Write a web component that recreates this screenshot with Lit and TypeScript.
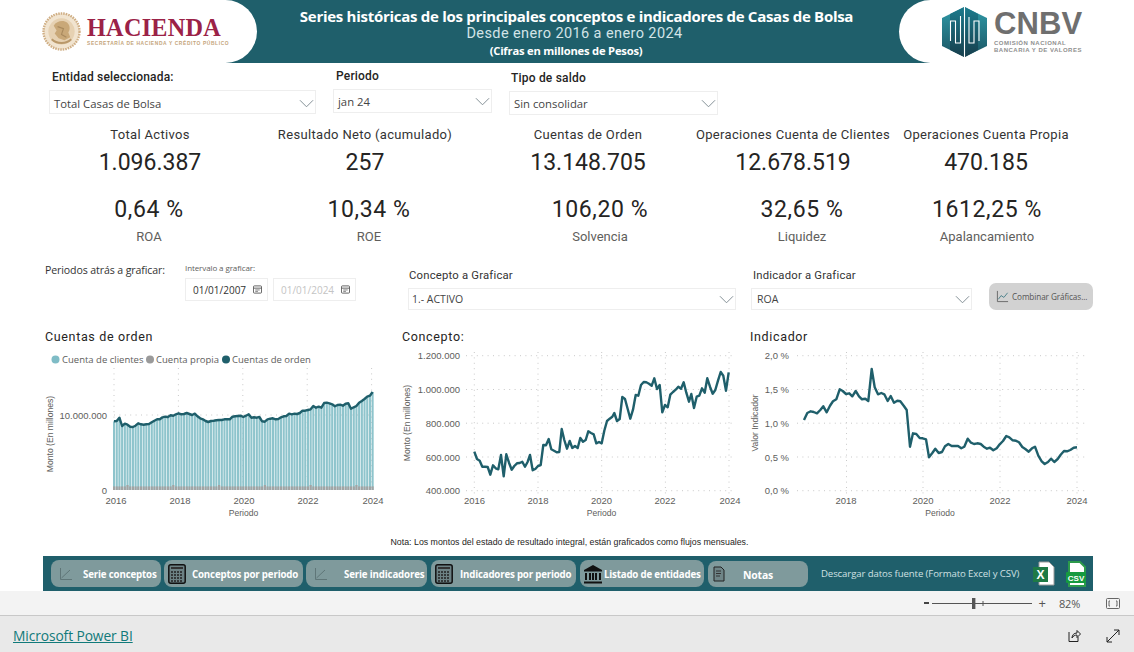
import { LitElement, html, css, svg } from "lit";
import { customElement } from "lit/decorators.js";

type P = [number, number];

// Series are given in zoomed reference units and mapped to page pixels below.
const c2raw = "238,335;246,357;254,362;262,380;270,380;278,381;286,404;294,376;302,385;310,388;318,345;326,409;334,343;342,368;350,389;358,378;366,370;374,369;382,365;390,380;398,365;405,345;413,391;421,387;429,378;437,375;445,315;453,316;461,297;469,328;477,332;485,337;493,336;500,267;508,300;516,326;524,303;532,324;540,318;548,324;556,294;564,305;572,300;580,274;588,279;596,283;604,310;612,306;620,310;628,272;636,243;644,236;652,230;658,219;666,243;674,237;682,171;690,177;698,207;706,236;714,209;722,165;730,167;738,135;746,126;754,127;762,131;770,137;778,115;786,147;794,135;802,217;810,195;818,202;826,164;834,156;842,149;850,140;858,146;866,127;874,158;882,185;889,162;897,204;905,170;913,167;921,145;929,158;937,115;945,140;953,161;961,150;969,122;977,96;985,107;993,152;1001,97";
const c3raw = "177,240;187,219;197,214;206,216;216,220;226,210;235,199;245,217;255,197;264,184;274,178;284,148;293,153;303,162;313,160;322,169;332,153;342,169;351,178;361,176;370,183;380,87;389,142;399,163;409,159;418,163;428,183;437,168;447,188;457,182;466,184;476,197;485,210;495,320;504,280;514,282;524,294;533,295;543,298;552,352;562,339;571,326;581,339;591,336;600,319;610,312;620,318;629,318;639,318;649,325;658,320;668,296;678,308;687,312;697,310;707,312;716,320;726,326;735,323;745,331;755,325;764,313;774,303;784,288;793,292;803,301;813,302;822,307;832,321;841,327;851,335;861,325;870,320;880,347;890,364;899,372;909,366;918,356;928,366;938,357;947,344;957,333;966,334;976,330;986,323;996,322";
const c1y = [124,123,113,138,131,134,140,141,137,130,133,134,133,132,127,122,118,118,112,110,111,106,107,103,100,103,102,99,102,105,101,109,115,118,123,126,123,122,121,120,120,118,118,118,110,109,108,107,111,107,103,113,112,113,111,124,125,118,116,115,118,117,112,109,108,101,103,101,102,99,92,92,90,88,78,83,80,83,69,68,70,73,79,75,74,77,71,70,86,82,78,68,63,57,50,47,36];

const parse = (s: string): P[] => s.split(";").map((p) => p.split(",").map(Number) as P);
const path = (pts: P[]) => pts.map((p) => `${p[0].toFixed(1)},${p[1].toFixed(1)}`).join(" ");

// chart-local coordinates: row top = 326 on the page
const ROW = 326;
const c1Org = 43, c2Org = 398, c3Org = 745;
const c1Pts: P[] = c1y.map((y, i) => [30 + (252 + i * 8.08) / 3 - c1Org, 380 + y / 3 - ROW]);
const c2Pts: P[] = parse(c2raw).map(([x, y]) => [395 + x / 3 - c2Org, 340 + y / 3 - ROW]);
const c3Pts: P[] = parse(c3raw).map(([x, y]) => [745 + x / 3 - c3Org, 340 + y / 3 - ROW]);

const chevron = html`<svg class="chev" viewBox="0 0 16 9"><path d="M1 1l7 7 7-7" fill="none" stroke="#7d8a90" stroke-width="1"/></svg>`;
const calendar = html`<svg class="cal" viewBox="0 0 10 9"><rect x=".5" y=".5" width="9" height="8" rx="1" fill="none" stroke="#555"/><path d="M.5 3h9" stroke="#555"/><path d="M2.5 5h5M2.5 6.6h3" stroke="#777"/></svg>`;
const lineIcon = html`<svg class="ic-line" viewBox="0 0 14 14"><path d="M1.5 1v11.5H13" fill="none" stroke="#5f7678" stroke-width="1"/><path d="M2.5 11L11 3" stroke="#5f7678" stroke-width="1"/></svg>`;
const tableIcon = html`<svg class="ic-tab" viewBox="0 0 18 20"><rect x=".8" y=".8" width="16.4" height="18.4" rx="2" fill="#6c8184" stroke="#111" stroke-width="1.5"/><path d="M3 4h12" stroke="#333" stroke-width="2"/><path d="M3 8h12M3 11h12M3 14h12M3 17h12" stroke="#222" stroke-width="1.6" stroke-dasharray="2 1"/></svg>`;
const bankIcon = html`<svg class="ic-bank" viewBox="0 0 20 20"><path d="M10 1L1 6v1.5h18V6z" fill="#111"/><path d="M3 9v7M7 9v7M10 9v7M13 9v7M17 9v7" stroke="#111" stroke-width="2"/><path d="M1 17.5h18v2H1z" fill="#111"/></svg>`;
const noteIcon = html`<svg class="ic-note" viewBox="0 0 12 16"><path d="M1 1h7l3 3v11H1z" fill="#6f8587" stroke="#222" stroke-width="1"/><path d="M3 5h5M3 7.5h5M3 10h4" stroke="#333"/></svg>`;

const hGrid = (ys: number[], x1: number, x2: number) =>
  ys.map((y) => svg`<line class="grid" x1=${x1} x2=${x2} y1=${y} y2=${y}></line>`);
const vGrid = (xs: number[], y1: number, y2: number) =>
  xs.map((x) => svg`<line class="grid" x1=${x} x2=${x} y1=${y1} y2=${y2}></line>`);
const xTicks = (ticks: [number, string][], y: number) =>
  ticks.map(([x, t]) => svg`<text class="tick" x=${x} y=${y} text-anchor="middle">${t}</text>`);
const yTicks = (ticks: [number, string][], x: number) =>
  ticks.map(([y, t]) => svg`<text class="tick" x=${x} y=${y + 3.5} text-anchor="end">${t}</text>`);

@customElement("app-root")
export class AppRoot extends LitElement {
  static styles = css`
    :host { display: block; width: 1134px; height: 652px; overflow: hidden; background: #fff; font-family: "Roboto", "Liberation Sans", sans-serif; color: #252423; }
    * { box-sizing: border-box; }
    .page { display: flex; flex-direction: column; width: 1134px; height: 652px; }

    .header { height: 63px; flex: none; display: flex; background: #1f5f6b; }
    .brand-l { width: 257px; flex: none; background: #fff; border-radius: 0 32px 32px 0; display: flex; align-items: center; padding-left: 42px; gap: 6px; }
    .brand-r { width: 235px; flex: none; background: #fff; border-radius: 32px 0 0 32px; display: flex; align-items: center; padding-left: 43px; gap: 7px; }
    .titles { flex: 1; color: #fff; text-align: center; display: flex; flex-direction: column; align-items: center; padding-top: 7px; font-family: "Open Sans", sans-serif; }
    .t1 { font-weight: 700; font-size: 15px; line-height: 18px; letter-spacing: -0.28px; white-space: nowrap; margin-right: 3px; }
    .t2 { font-size: 14.5px; line-height: 18px; font-family: "Roboto", sans-serif; letter-spacing: 0.4px; color: #d3e4e7; white-space: nowrap; margin-right: 7px; }
    .t3 { font-weight: 700; font-size: 11.2px; line-height: 15px; letter-spacing: -0.2px; white-space: nowrap; margin-right: 24px; }
    .seal { width: 39px; height: 39px; flex: none; }
    .hac { display: flex; flex-direction: column; }
    .hac-name { font-family: "Liberation Serif", serif; font-weight: 700; font-size: 24.2px; line-height: 24px; color: #9b2247; letter-spacing: 0.3px; }
    .hac-sub { font-family: "Liberation Sans", sans-serif; font-weight: 700; font-size: 4.9px; line-height: 8px; color: #c4a57a; letter-spacing: 0.62px; white-space: nowrap; }
    .hex { width: 45px; height: 50px; flex: none; }
    .cnbv { display: flex; flex-direction: column; }
    .cnbv-name { font-family: "Liberation Sans", sans-serif; font-weight: 700; font-size: 31px; line-height: 28px; color: #6f6f6f; letter-spacing: 0.1px; }
    .cnbv-sub { font-family: "Liberation Sans", sans-serif; font-weight: 700; font-size: 6px; line-height: 7px; color: #8f8f8f; letter-spacing: 0.5px; white-space: nowrap; margin-top: 2px; }

    .filters { height: 55px; flex: none; display: flex; padding-left: 49px; gap: 17px; }
    .filter { display: flex; flex-direction: column; }
    .f1 { width: 267px; padding-top: 6px; }
    .f2 { width: 159px; padding-top: 5px; }
    .f3 { width: 209px; padding-top: 7px; }
    .flabel { font-size: 12px; line-height: 16px; font-weight: 500; padding-left: 3px; letter-spacing: 0.2px; height: 21px; white-space: nowrap; }
    .f3 .flabel { padding-left: 2px; }
    .drop { display: flex; align-items: center; justify-content: space-between; height: 24px; border: 1px solid #eeeeee; padding: 2px 1px 0 4px; font-family: "Open Sans", sans-serif; font-size: 11.3px; color: #444; }
    .f2 .drop, .f3 .drop { padding-top: 0; }
    .chev { width: 15px; height: 9px; flex: none; }

    .kpis { height: 132px; flex: none; display: flex; flex-direction: column; padding-left: 50px; padding-top: 8px; }
    .krow { display: grid; white-space: nowrap; }
    .kr1 { grid-template-columns: 200px 230px 216px 194px 192px; height: 60px; }
    .kr2 { grid-template-columns: 198px 242px 220px 184px 186px; }
    .kpi { display: flex; flex-direction: column; align-items: center; }
    .ktitle { font-size: 13px; line-height: 17px; letter-spacing: 0.33px; color: #333; }
    .kvalue { font-size: 23px; line-height: 40px; letter-spacing: 0; color: #252423; }
    .kval2 { font-size: 23px; line-height: 28px; letter-spacing: 0.6px; color: #252423; margin-top: 10px; }
    .klabel { font-size: 13px; line-height: 18px; letter-spacing: 0; color: #605e5c; margin-top: 4px; }

    .controls { height: 76px; flex: none; display: flex; padding: 8px 0 0 45px; }
    .back { width: 140px; font-size: 10.6px; line-height: 16px; font-family: "Open Sans", sans-serif; letter-spacing: -0.12px; color: #333; padding-top: 4px; white-space: nowrap; }
    .interval { width: 223px; display: flex; flex-direction: column; }
    .ilabel { font-size: 8px; line-height: 12px; color: #605e5c; height: 20px; padding-top: 4px; font-family: "Open Sans", sans-serif; letter-spacing: -0.1px; }
    .dates { display: flex; gap: 5px; }
    .date { width: 83px; height: 23px; border: 1px solid #eeeeee; display: flex; justify-content: space-between; align-items: center; padding: 0 5px 0 7px; font-family: "Open Sans", sans-serif; font-size: 10px; color: #333; }
    .date.dim { color: #c4c4c4; }
    .cal { width: 9px; height: 9px; }
    .concept { width: 343px; display: flex; flex-direction: column; padding-top: 9px; }
    .indic { width: 238px; display: flex; flex-direction: column; padding-top: 9px; }
    .clabel { font-size: 11.3px; line-height: 16px; letter-spacing: 0.2px; color: #333; height: 21px; padding: 1px 0 0 1px; }
    .indic .clabel { padding-left: 2px; }
    .drop.c { height: 22px; width: 328px; padding: 0 1px 0 3px; font-size: 10.5px; }
    .indic .drop.c { width: 221px; padding-left: 5px; }
    .combine { width: 104px; height: 27px; margin-top: 25px; border-radius: 7px; background: #d2d2d2; color: #555; font-family: "Open Sans", sans-serif; font-size: 8.2px; display: flex; align-items: center; gap: 3px; padding-left: 7px; white-space: nowrap; letter-spacing: -0.1px; }
    .combine svg { width: 13px; height: 13px; flex: none; }

    .charts { height: 196px; flex: none; display: flex; padding-left: 43px; gap: 10px; }
    .charts svg.chart { height: 196px; display: block; overflow: visible; flex: none; }
    .c1 { width: 345px; }
    .c2 { width: 337px; }
    .c3 { width: 340px; }
    .grid { stroke: #c9c9c9; stroke-width: 1; stroke-dasharray: 1 4.4; }
    .ctitle { font-family: "Roboto", sans-serif; font-size: 12.5px; letter-spacing: 0.65px; fill: #252423; }
    .tick { font-family: "Liberation Sans", sans-serif; font-size: 9.5px; fill: #605e5c; }
    .axis { font-family: "Liberation Sans", sans-serif; font-size: 8.6px; fill: #605e5c; }
    .legend { font-family: "Open Sans", sans-serif; font-size: 9.5px; fill: #605e5c; }
    .line { fill: none; stroke: #1f5f6b; stroke-width: 2.4; stroke-linejoin: round; }
    .bar { fill: #8ec4cc; }
    .bar2 { fill: #a3a3a3; }

    .note { height: 34px; flex: none; text-align: center; font-family: "Liberation Sans", sans-serif; font-size: 8.8px; line-height: 13px; padding: 14px 0 0 5px; color: #252423; }

    .bar-nav { height: 35px; flex: none; margin: 0 41px 0 43px; background: #1f5f6b; display: flex; align-items: center; padding-left: 8px; gap: 3px; }
    .btn { height: 27px; border-radius: 8px; background: #7f9a9c; color: #fff; font-family: "Open Sans", sans-serif; font-weight: 700; font-size: 9.7px; display: flex; align-items: center; white-space: nowrap; padding-left: 8px; letter-spacing: -0.15px; }
    .btn span { padding-top: 2px; }
    .b1 { width: 110px; gap: 10px; }
    .b2 { width: 139px; gap: 6px; padding-left: 4px; }
    .b3 { width: 121px; gap: 16px; }
    .b4 { width: 145px; gap: 7px; padding-left: 4px; margin-left: 1px; letter-spacing: -0.18px; }
    .b5 { width: 124px; gap: 1px; padding-left: 3px; margin-left: 1px; letter-spacing: -0.18px; }
    .b6 { width: 100px; gap: 18px; padding-left: 5px; margin-left: 1px; font-size: 10.4px; height: 26px; }
    .ic-line { width: 14px; height: 14px; flex: none; }
    .ic-tab { width: 18px; height: 20px; flex: none; }
    .ic-bank { width: 20px; height: 20px; flex: none; }
    .ic-note { width: 12px; height: 16px; flex: none; }
    .dl { font-family: "Open Sans", sans-serif; font-size: 9.6px; color: #cfe0e2; margin-left: 10px; white-space: nowrap; letter-spacing: -0.1px; }
    .xl { width: 24px; height: 26px; margin-left: 10px; flex: none; }
    .csv { width: 22px; height: 26px; margin-left: 6px; flex: none; }
    .xl text, .csv text { font-family: "Liberation Sans", sans-serif; font-weight: 700; }

    .status { height: 25px; flex: none; background: #f3f3f3; border-bottom: 1px solid #c8c8c8; display: flex; align-items: center; justify-content: flex-end; font-family: "Open Sans", sans-serif; font-size: 11px; color: #555; padding-right: 14px; }
    .minus { width: 5px; height: 2px; background: #444; margin-right: 3px; }
    .slider { width: 100px; height: 11px; flex: none; margin-right: 7px; }
    .plus { font-size: 13px; margin-right: 13px; }
    .pct { width: 24px; margin-right: 23px; letter-spacing: -0.2px; }
    .fit { width: 14px; height: 11px; flex: none; }
    .footer { flex: 1; background: #e9e9e9; display: flex; align-items: center; padding: 3px 14px 0 13px; }
    .link { font-family: "Open Sans", sans-serif; font-size: 13.8px; color: #117a7a; text-decoration: underline; letter-spacing: -0.1px; flex: 1; }
    .fi { width: 14px; height: 14px; flex: none; margin-left: 25px; }
  `;

  private dropdown(text: string) {
    return html`<div class="drop"><span>${text}</span>${chevron}</div>`;
  }

  private kpi(title: string, value: string) {
    return html`<div class="kpi"><span class="ktitle">${title}</span><span class="kvalue">${value}</span></div>`;
  }

  private kpi2(value: string, label: string) {
    return html`<div class="kpi"><span class="kval2">${value}</span><span class="klabel">${label}</span></div>`;
  }

  private chart1() {
    const base = 490 - ROW;
    const xs = [71, 135.4, 199.8, 264.2, 328.6];
    return html`<svg class="chart c1" viewBox="0 0 345 196">
      <text class="ctitle" x="2" y="15">Cuentas de orden</text>
      <circle cx="12.5" cy="33.5" r="4" fill="#7fbcc6"></circle><text class="legend" x="19" y="37">Cuenta de clientes</text>
      <circle cx="107" cy="33.5" r="4" fill="#9a9a9a"></circle><text class="legend" x="113" y="37">Cuenta propia</text>
      <circle cx="183" cy="33.5" r="4" fill="#1f5f6b"></circle><text class="legend" x="189" y="37">Cuentas de orden</text>
      ${hGrid([89], 71, 330)}
      ${vGrid(xs, 42, 164)}
      ${c1Pts.map(([x, y]) => svg`<rect class="bar" x=${x - 1} y=${y} width="2.1" height=${base - y}></rect>`)}
      ${c1Pts.map(([x], i) => {
        const h = i % 17 === 5 ? 5 : 3.6;
        return svg`<rect class="bar2" x=${x - 1} y=${base - h} width="2.1" height=${h}></rect>`;
      })}
      <polyline class="line" points=${path(c1Pts)}></polyline>
      ${yTicks([[89, "10.000.000"], [164, "0"]], 64)}
      ${xTicks([[73, "2016"], [137, "2018"], [201, "2020"], [265, "2022"], [330, "2024"]], 178)}
      <text class="axis" x="200.5" y="190" text-anchor="middle">Periodo</text>
      <text class="axis" transform="translate(9.5 108) rotate(-90)" text-anchor="middle">Monto (En millones)</text>
    </svg>`;
  }

  private chart2() {
    const xs = [474.3, 538, 601.7, 665.4, 729].map((x) => x - c2Org);
    const ys = [355.7, 389.5, 423.2, 457, 490.7].map((y) => y - ROW);
    return html`<svg class="chart c2" viewBox="0 0 337 196">
      <text class="ctitle" x="4" y="15">Concepto:</text>
      ${hGrid(ys, 68, 338)}
      ${vGrid(xs, 26, 168)}
      <polyline class="line" points=${path(c2Pts)}></polyline>
      ${yTicks([[ys[0], "1.200.000"], [ys[1], "1.000.000"], [ys[2], "800.000"], [ys[3], "600.000"], [ys[4], "400.000"]], 62)}
      ${xTicks([[76.5, "2016"], [140, "2018"], [203.5, "2020"], [267, "2022"], [332, "2024"]], 178)}
      <text class="axis" x="203.5" y="190" text-anchor="middle">Periodo</text>
      <text class="axis" transform="translate(12 97) rotate(-90)" text-anchor="middle">Monto (En millones)</text>
    </svg>`;
  }

  private chart3() {
    const xs = [846.5, 923, 1000, 1077].map((x) => x - c3Org);
    const ys = [355.7, 389.5, 423.2, 457, 490.7].map((y) => y - ROW);
    return html`<svg class="chart c3" viewBox="0 0 340 196">
      <text class="ctitle" x="5" y="15">Indicador</text>
      ${hGrid(ys, 52, 340)}
      ${vGrid(xs, 26, 168)}
      <polyline class="line" points=${path(c3Pts)}></polyline>
      ${yTicks([[ys[0], "2,0 %"], [ys[1], "1,5 %"], [ys[2], "1,0 %"], [ys[3], "0,5 %"], [ys[4], "0,0 %"]], 44)}
      ${xTicks([[101, "2018"], [178, "2020"], [255, "2022"], [332, "2024"]], 178)}
      <text class="axis" x="195" y="190" text-anchor="middle">Periodo</text>
      <text class="axis" transform="translate(13 97) rotate(-90)" text-anchor="middle">Valor Indicador</text>
    </svg>`;
  }

  render() {
    return html`<div class="page">
      <div class="header">
        <div class="brand-l">
          <svg class="seal" viewBox="0 0 40 40">
            <circle cx="20" cy="20" r="18.5" fill="#f1e4d0" stroke="#cfae84" stroke-width="2.4" stroke-dasharray="1.6 1"></circle>
            <circle cx="20" cy="20" r="13.5" fill="#e6d1b2"></circle>
            <path d="M12 14c3-5 10-6 14-3 3 3 3 7 1 10l2 5-6 3-6-2-4-5 2-3z" fill="#c9a878"></path>
            <path d="M10 28c5 5 15 5 20 0" fill="none" stroke="#b9986a" stroke-width="2"></path>
            <path d="M16 15l6 2-2 6 5 3" fill="none" stroke="#a98a5e" stroke-width="1.2"></path>
          </svg>
          <div class="hac">
            <span class="hac-name">HACIENDA</span>
            <span class="hac-sub">SECRETARÍA DE HACIENDA Y CRÉDITO PÚBLICO</span>
          </div>
        </div>
        <div class="titles">
          <span class="t1">Series históricas de los principales conceptos e indicadores de Casas de Bolsa</span>
          <span class="t2">Desde enero 2016 a enero 2024</span>
          <span class="t3">(Cifras en millones de Pesos)</span>
        </div>
        <div class="brand-r">
          <svg class="hex" viewBox="0 0 45 50">
            <defs>
              <linearGradient id="hx" x1="0" y1="0" x2="0" y2="1"><stop offset="0" stop-color="#2f9aa8"></stop><stop offset="1" stop-color="#1b5563"></stop></linearGradient>
              <linearGradient id="hd" x1="0" y1="0" x2="0" y2="1"><stop offset="0" stop-color="#1c7a8c"></stop><stop offset="1" stop-color="#173f4d"></stop></linearGradient>
            </defs>
            <polygon points="22.5,0 45,11 45,39 22.5,50 0,39 0,11" fill="url(#hx)"></polygon>
            <polygon points="8,7 22,0 22,50 8,43" fill="url(#hd)"></polygon>
            <polygon points="23,0 36,7 36,43 23,50" fill="url(#hd)"></polygon>
            <path d="M8.5 34V14h5v22h5V9M22.5 0v50M27 10v26h5V14h5v20" fill="none" stroke="#fff" stroke-width="1.1"></path>
          </svg>
          <div class="cnbv">
            <span class="cnbv-name">CNBV</span>
            <span class="cnbv-sub">COMISIÓN NACIONAL<br />BANCARIA Y DE VALORES</span>
          </div>
        </div>
      </div>

      <div class="filters">
        <div class="filter f1"><div class="flabel">Entidad seleccionada:</div>${this.dropdown("Total Casas de Bolsa")}</div>
        <div class="filter f2"><div class="flabel">Periodo</div>${this.dropdown("jan 24")}</div>
        <div class="filter f3"><div class="flabel">Tipo de saldo</div>${this.dropdown("Sin consolidar")}</div>
      </div>

      <div class="kpis">
        <div class="krow kr1">
          ${this.kpi("Total Activos", "1.096.387")}
          ${this.kpi("Resultado Neto (acumulado)", "257")}
          ${this.kpi("Cuentas de Orden", "13.148.705")}
          ${this.kpi("Operaciones Cuenta de Clientes", "12.678.519")}
          ${this.kpi("Operaciones Cuenta Propia", "470.185")}
        </div>
        <div class="krow kr2">
          ${this.kpi2("0,64 %", "ROA")}
          ${this.kpi2("10,34 %", "ROE")}
          ${this.kpi2("106,20 %", "Solvencia")}
          ${this.kpi2("32,65 %", "Liquidez")}
          ${this.kpi2("1612,25 %", "Apalancamiento")}
        </div>
      </div>

      <div class="controls">
        <div class="back">Periodos atrás a graficar:</div>
        <div class="interval">
          <div class="ilabel">Intervalo a graficar:</div>
          <div class="dates">
            <div class="date"><span>01/01/2007</span>${calendar}</div>
            <div class="date dim"><span>01/01/2024</span>${calendar}</div>
          </div>
        </div>
        <div class="concept">
          <div class="clabel">Concepto a Graficar</div>
          <div class="drop c"><span>1.- ACTIVO</span>${chevron}</div>
        </div>
        <div class="indic">
          <div class="clabel">Indicador a Graficar</div>
          <div class="drop c"><span>ROA</span>${chevron}</div>
        </div>
        <div class="combine">
          <svg viewBox="0 0 14 14"><path d="M1.5 1v11.5H13" fill="none" stroke="#666"></path><path d="M2.5 10l3-4 3 2 4-5" fill="none" stroke="#4a7f89"></path></svg>
          Combinar Gráficas...
        </div>
      </div>

      <div class="charts">${this.chart1()}${this.chart2()}${this.chart3()}</div>

      <div class="note">Nota: Los montos del estado de resultado integral, están graficados como flujos mensuales.</div>

      <div class="bar-nav">
        <div class="btn b1">${lineIcon}<span>Serie conceptos</span></div>
        <div class="btn b2">${tableIcon}<span>Conceptos por periodo</span></div>
        <div class="btn b3">${lineIcon}<span>Serie indicadores</span></div>
        <div class="btn b4">${tableIcon}<span>Indicadores por periodo</span></div>
        <div class="btn b5">${bankIcon}<span>Listado de entidades</span></div>
        <div class="btn b6">${noteIcon}<span>Notas</span></div>
        <span class="dl">Descargar datos fuente (Formato Excel y CSV)</span>
        <svg class="xl" viewBox="0 0 24 26">
          <path d="M7 1h10l5 5v18H7z" fill="#fff" stroke="#9a9a9a"></path>
          <rect x="1" y="6" width="15" height="15" fill="#1e7a45"></rect>
          <text x="8.5" y="18" font-size="12" fill="#fff" text-anchor="middle">X</text>
        </svg>
        <svg class="csv" viewBox="0 0 22 26">
          <path d="M4 1h11l5 5v19H4z" fill="#fff" stroke="#2c9a4b" stroke-width="2"></path>
          <rect x="1" y="11" width="20" height="11" rx="1" fill="#169a3f"></rect>
          <text x="11" y="20" font-size="8" fill="#fff" text-anchor="middle">CSV</text>
        </svg>
      </div>

      <div class="status">
        <span class="minus"></span>
        <svg class="slider" viewBox="0 0 100 11"><path d="M0 5.5h100" stroke="#555"></path><path d="M51 3v5" stroke="#555"></path><rect x="40" y="0" width="3.4" height="11" fill="#555"></rect></svg>
        <span class="plus">+</span>
        <span class="pct">82%</span>
        <svg class="fit" viewBox="0 0 14 11"><rect x=".5" y=".5" width="13" height="10" rx="1" fill="none" stroke="#666"></rect><path d="M4 3H3v5h1M10 3h1v5h-1" fill="none" stroke="#666"></path></svg>
      </div>
      <div class="footer">
        <span class="link">Microsoft Power BI</span>
        <svg class="fi" viewBox="0 0 14 14"><path d="M2 3v9.5h9V8" fill="none" stroke="#222"></path><path d="M5 9c0-3 2-5 5-5V1.5L13.5 5 10 8.5V6C8 6 6 7 5 9z" fill="none" stroke="#222"></path></svg>
        <svg class="fi" viewBox="0 0 14 14"><path d="M1 13L13 1M8 1h5v5M1 8v5h5" fill="none" stroke="#222"></path></svg>
      </div>
    </div>`;
  }
}
